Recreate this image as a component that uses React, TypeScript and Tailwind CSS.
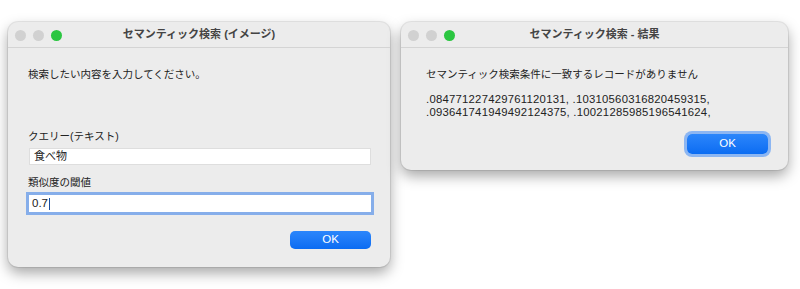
const font = { fontFamily: '"Liberation Sans", "Noto Sans CJK JP", sans-serif' };

function TrafficLights() {
  return (
    <div className="absolute left-[7px] top-[8px] flex gap-[7px]">
      <span className="h-[11px] w-[11px] rounded-full bg-[#d1d1d1]" />
      <span className="h-[11px] w-[11px] rounded-full bg-[#d1d1d1]" />
      <span className="h-[11px] w-[11px] rounded-full bg-[#2bc641]" />
    </div>
  );
}

function Window({
  title,
  className,
  children,
}: {
  title: string;
  className: string;
  children: React.ReactNode;
}) {
  return (
    <div
      className={`flex flex-col overflow-hidden rounded-[10px] bg-[#ececec] shadow-[0_6px_14px_rgba(0,0,0,0.35),0_0_0_1px_rgba(0,0,0,0.08)] ${className}`}
    >
      <div className="relative flex h-[26px] shrink-0 items-center justify-center border-b border-[#d4d4d4]">
        <TrafficLights />
        <span className="text-[11px] font-bold text-[#444]">{title}</span>
      </div>
      {children}
    </div>
  );
}

function OkButton({ focused }: { focused?: boolean }) {
  return (
    <button
      className={`flex items-center justify-center rounded-[5px] bg-gradient-to-b from-[#2b86fb] to-[#0a6cf2] text-[11.5px] text-white ${
        focused ? "h-[20px] w-[81px] ring-[3px] ring-[#8cb6f2]" : "h-[18px] w-[81px]"
      }`}
    >
      OK
    </button>
  );
}

export default function App() {
  return (
    <div className="h-[289px] w-[800px] overflow-hidden bg-white text-[#222]" style={font}>
      <div className="flex items-start gap-[11px] pl-[8px] pt-[22px]">
        <Window title="セマンティック検索 (イメージ)" className="h-[245px] w-[382px]">
          <div className="flex flex-1 flex-col pl-[20px] pr-[19px] pt-[19px] text-[10.5px]">
            <p className="leading-[14px]">検索したい内容を入力してください。</p>
            <p className="mt-[48px] leading-[14px]">クエリー(テキスト)</p>
            <div className="mt-[5px] ml-[1px] flex h-[17px] w-[342px] items-center border border-[#dedede] bg-white px-[4px] text-[11px]">
              食べ物
            </div>
            <p className="mt-[10px] leading-[14px]">類似度の閾値</p>
            <div className="mt-[6px] ml-[1px] flex h-[17px] w-[342px] items-center bg-white px-[3px] text-[11.5px] ring-[3px] ring-[#86aeea]">
              0.7<span className="ml-[0.5px] h-[12px] w-[1px] bg-[#1a4fa0]" />
            </div>
            <div className="mt-[19px] flex justify-end">
              <OkButton />
            </div>
          </div>
        </Window>
        <Window title="セマンティック検索 - 結果" className="h-[148px] w-[387px]">
          <div className="flex flex-1 flex-col pl-[25px] pr-[20px] pt-[19px] text-[10.5px]">
            <p className="leading-[14px]">セマンティック検索条件に一致するレコードがありません</p>
            <div className="mt-[12px] text-[11.3px] leading-[13px] tracking-[0.25px]">
              <p>.084771227429761120131, .10310560316820459315,</p>
              <p>.093641741949492124375, .10021285985196541624,</p>
            </div>
            <div className="mt-[15px] flex justify-end">
              <OkButton focused />
            </div>
          </div>
        </Window>
      </div>
    </div>
  );
}
